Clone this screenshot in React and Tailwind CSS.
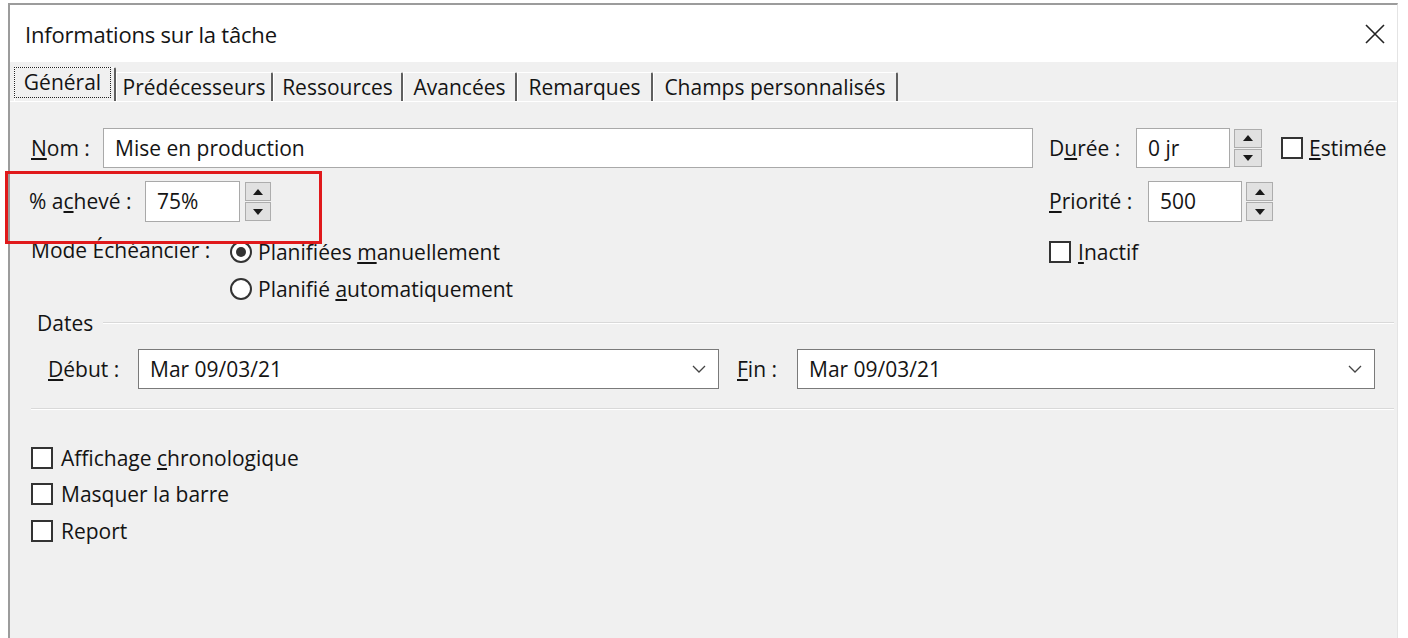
import React from 'react';

const Spinner = ({ w }) => (
    <div className={`flex flex-col gap-[1px] h-full ${w}`}>
        <div className="flex-1 bg-[#e1e1e1] border border-[#adadad] flex items-center justify-center">
            <svg width="10" height="6" viewBox="0 0 10 6"><path d="M5 0 L10 6 L0 6 Z" fill="#1a1a1a" /></svg>
        </div>
        <div className="flex-1 bg-[#e1e1e1] border border-[#adadad] flex items-center justify-center">
            <svg width="10" height="6" viewBox="0 0 10 6"><path d="M0 0 L10 0 L5 6 Z" fill="#1a1a1a" /></svg>
        </div>
    </div>
);

const Checkbox = () => <div className="w-[22px] h-[22px] border-2 border-[#333] bg-white shrink-0" />;

const Radio = ({ checked }) => (
    <div className="w-[22px] h-[22px] rounded-full border-2 border-[#333] bg-white flex items-center justify-center shrink-0">
        {checked && <div className="w-[10px] h-[10px] rounded-full bg-[#333]" />}
    </div>
);

const Chevron = () => (
    <svg width="14" height="8" viewBox="0 0 14 8" className="mr-[12px]">
        <polyline points="1,1 7,7 13,1" fill="none" stroke="#444" strokeWidth="1.3" />
    </svg>
);

const Field = ({ value, w }) => (
    <div className={`h-full ${w} bg-white border border-[#a9a9a9] flex items-center pl-[11px]`}>{value}</div>
);

const tabs = [
    { label: 'Prédécesseurs', w: 'w-[157px]' },
    { label: 'Ressources', w: 'w-[130px]' },
    { label: 'Avancées', w: 'w-[114px]' },
    { label: 'Remarques', w: 'w-[136px]' },
    { label: 'Champs personnalisés', w: 'w-[245px]' },
];

export default function App() {
    return (
        <div className="w-[1408px] h-[638px] bg-white relative overflow-hidden font-['Open_Sans','Noto_Sans',sans-serif] text-[21px] text-[#141414] leading-none">
            <div className="ml-[8px] mt-[3px] w-[1390px] h-[635px] border-t-2 border-l-2 border-[#9c9c9c] border-r border-r-[#e4e4e4] flex flex-col">
                {/* title bar */}
                <div className="h-[57px] bg-white flex items-center justify-between pl-[15px] pr-[12px]">
                    <span className="text-[22px] tracking-[-0.2px]">Informations sur la tâche</span>
                    <svg width="20" height="20" viewBox="0 0 20 20">
                        <path d="M1 1 L19 19 M19 1 L1 19" stroke="#222" strokeWidth="1.6" />
                    </svg>
                </div>

                <div className="flex-1 bg-[#f0f0f0] flex flex-col">
                    {/* tabs */}
                    <div className="h-[39px] pl-[4px] flex items-end">
                        <div className="w-[102px] h-[34px] border-t border-l border-white border-r-2 border-r-[#5e5e5e] rounded-tr-[2px] flex items-center justify-center">
                            <span className="border border-dotted border-[#222] px-[9px] py-[4px] -mt-[4px] -ml-[4px]">Général</span>
                        </div>
                        {tabs.map(t => (
                            <div key={t.label} className={`${t.w} h-[29px] border-t border-l border-white border-r-2 border-r-[#5e5e5e] rounded-tr-[2px] flex items-center justify-center`}>
                                {t.label}
                            </div>
                        ))}
                    </div>

                    {/* panel */}
                    <div className="flex-1 border-t border-white pl-[21px] flex flex-col">
                        <div className="mt-[26px] h-[40px] flex items-center">
                            <div className="w-[1018px] h-full flex items-center">
                                <span className="w-[72px]"><u className="underline-offset-2">N</u>om :</span>
                                <Field value="Mise en production" w="w-[930px]" />
                            </div>
                            <div className="h-full flex items-center">
                                <span className="w-[87px]">D<u className="underline-offset-2">u</u>rée :</span>
                                <Field value="0 jr" w="w-[94px]" />
                                <div className="ml-[4px] h-[38px]"><Spinner w="w-[28px]" /></div>
                                <div className="ml-[19px]"><Checkbox /></div>
                                <span className="ml-[6px]"><u className="underline-offset-2">E</u>stimée</span>
                            </div>
                        </div>

                        <div className="mt-[13px] h-[41px] flex items-center">
                            <div className="w-[1018px] h-full flex items-center">
                                <span className="w-[116px] -ml-[2px]">% a<u className="underline-offset-2">c</u>hevé :</span>
                                <Field value="75%" w="w-[95px]" />
                                <div className="ml-[5px] h-[39px]"><Spinner w="w-[26px]" /></div>
                            </div>
                            <div className="h-full flex items-center">
                                <span className="w-[99px]"><u className="underline-offset-2">P</u>riorité :</span>
                                <Field value="500" w="w-[94px]" />
                                <div className="ml-[4px] h-[39px]"><Spinner w="w-[27px]" /></div>
                            </div>
                        </div>

                        <div className="mt-[19px] h-[22px] flex items-center">
                            <div className="w-[1018px] flex items-center">
                                <span className="w-[199px] -mt-[4px]">Mode Échéancier :</span>
                                <Radio checked />
                                <span className="ml-[6px]">Planifiées <u className="underline-offset-2">m</u>anuellement</span>
                            </div>
                            <div className="flex items-center">
                                <Checkbox />
                                <span className="ml-[7px]"><u className="underline-offset-2">I</u>nactif</span>
                            </div>
                        </div>

                        <div className="mt-[15px] h-[22px] flex items-center pl-[199px]">
                            <Radio />
                            <span className="ml-[6px]">Planifié <u className="underline-offset-2">a</u>utomatiquement</span>
                        </div>

                        <div className="mt-[11px] h-[24px] flex items-center pr-[3px]">
                            <span className="ml-[6px]">Dates</span>
                            <div className="flex-1 ml-[10px] h-[2px] border-t border-[#d9d9d9] border-b border-b-white" />
                        </div>

                        <div className="mt-[14px] h-[40px] flex items-center">
                            <span className="ml-[17px] w-[90px]"><u className="underline-offset-2">D</u>ébut :</span>
                            <div className="w-[581px] h-full bg-white border border-[#7a7a7a] flex items-center justify-between pl-[11px]">
                                Mar 09/03/21<Chevron />
                            </div>
                            <span className="ml-[18px] w-[60px]"><u className="underline-offset-2">F</u>in :</span>
                            <div className="w-[578px] h-full bg-white border border-[#7a7a7a] flex items-center justify-between pl-[11px]">
                                Mar 09/03/21<Chevron />
                            </div>
                        </div>

                        <div className="mt-[19px] mr-[3px] h-[2px] border-t border-[#d9d9d9] border-b border-b-white" />

                        <div className="mt-[37px] h-[22px] flex items-center">
                            <Checkbox />
                            <span className="ml-[8px]">Affichage <u className="underline-offset-2">c</u>hronologique</span>
                        </div>
                        <div className="mt-[14px] h-[22px] flex items-center">
                            <Checkbox />
                            <span className="ml-[8px]">Masquer la barre</span>
                        </div>
                        <div className="mt-[15px] h-[22px] flex items-center">
                            <Checkbox />
                            <span className="ml-[8px]">Report</span>
                        </div>
                    </div>
                </div>
            </div>

            {/* annotation */}
            <div className="absolute left-[5px] top-[171px] w-[317px] h-[73px] border-[3px] border-[#e0191b]" />
        </div>
    );
}
